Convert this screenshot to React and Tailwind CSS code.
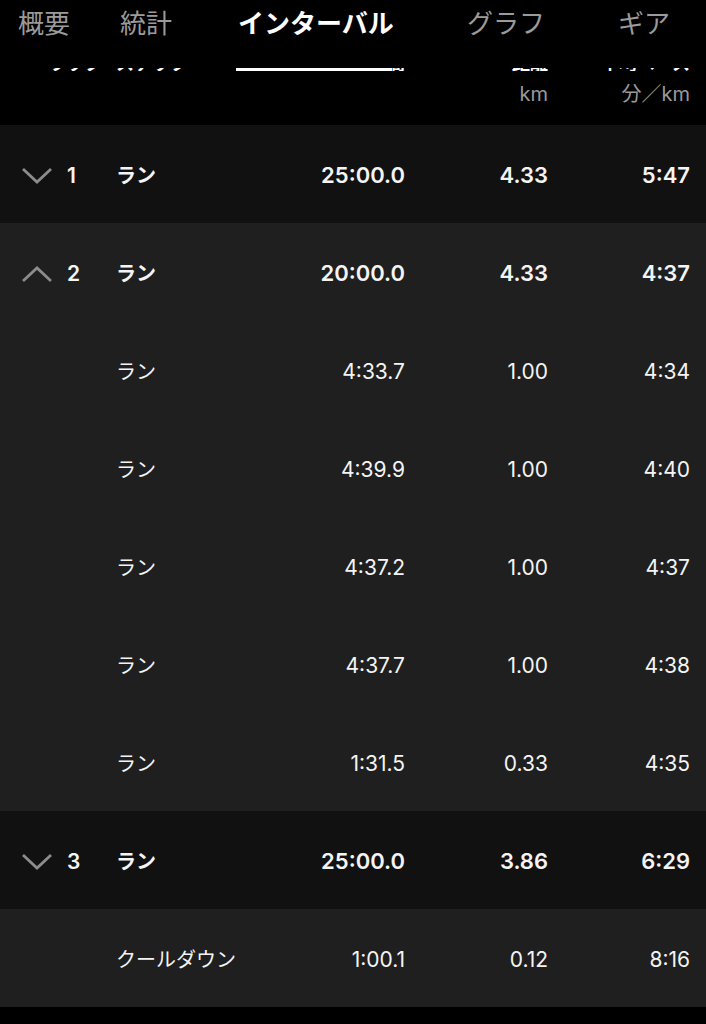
import React from "react";

const font = { fontFamily: '"Inter", "Noto Sans CJK JP", sans-serif' };

const rows = [
  { type: "main", open: false, n: "1", label: "ラン", time: "25:00.0", dist: "4.33", pace: "5:47", dark: true },
  { type: "main", open: true, n: "2", label: "ラン", time: "20:00.0", dist: "4.33", pace: "4:37" },
  { type: "sub", label: "ラン", time: "4:33.7", dist: "1.00", pace: "4:34" },
  { type: "sub", label: "ラン", time: "4:39.9", dist: "1.00", pace: "4:40" },
  { type: "sub", label: "ラン", time: "4:37.2", dist: "1.00", pace: "4:37" },
  { type: "sub", label: "ラン", time: "4:37.7", dist: "1.00", pace: "4:38" },
  { type: "sub", label: "ラン", time: "1:31.5", dist: "0.33", pace: "4:35" },
  { type: "main", open: false, n: "3", label: "ラン", time: "25:00.0", dist: "3.86", pace: "6:29", dark: true },
  { type: "sub", label: "クールダウン", time: "1:00.1", dist: "0.12", pace: "8:16" },
];

const Chevron = ({ up }) => (
  <svg width="32" height="18" viewBox="0 0 32 18" className="shrink-0">
    <path
      d={up ? "M2 16 L16 3 L30 16" : "M2 2 L16 15 L30 2"}
      fill="none"
      stroke="#8c8c8c"
      strokeWidth="2.8"
    />
  </svg>
);

const Row = ({ r }) => {
  const main = r.type === "main";
  const num = main ? "font-semibold text-[22px]" : "font-normal text-[21px]";
  return (
    <div
      className={`flex items-center h-[98px] pt-[3px] pr-[16px] text-[20px] text-[#f4f4f4] ${
        main ? "font-semibold" : "font-normal"
      } ${r.dark ? "bg-[#111111]" : "bg-[#1f1f1f]"}`}
    >
      <div className="w-[116px] flex items-center pl-[21px]">
        {main && (
          <>
            <Chevron up={r.open} />
            <span className="ml-[14px] text-[21px]">{r.n}</span>
          </>
        )}
      </div>
      <div className="flex-1">{r.label}</div>
      <div className={`w-[120px] text-right ${num}`}>{r.time}</div>
      <div className={`w-[143px] text-right ${num}`}>{r.dist}</div>
      <div className={`w-[142px] text-right ${num}`}>{r.pace}</div>
    </div>
  );
};

export default function App() {
  return (
    <div className="w-[706px] h-[1024px] bg-black overflow-hidden" style={font}>
      {/* tabs */}
      <div className="flex items-start h-[68px] pt-[4px] text-[26px] text-[#9b9b9b] whitespace-nowrap">
        <div className="ml-[18px]">概要</div>
        <div className="ml-[50px]">統計</div>
        <div className="ml-[66px] w-[157px] font-bold text-white">インターバル</div>
        <div className="ml-[72px]">グラフ</div>
        <div className="ml-[73px]">ギア</div>
      </div>
      {/* header, scrolled under tabs */}
      <div className="relative h-[57px]">
        <div className="absolute left-[236px] top-0 w-[156px] h-[3px] bg-white z-10" />
        <div className="h-[3px] overflow-hidden">
          <div className="flex items-end -mt-[17px] h-[22px] pr-[16px] text-[18px] leading-[18px] font-bold text-white whitespace-nowrap">
            <div className="w-[116px] pl-[48px]">ラップ</div>
            <div className="flex-1">ステップ</div>
            <div className="w-[120px] text-right">時間</div>
            <div className="w-[143px] text-right">距離</div>
            <div className="w-[142px] text-right">平均ペース</div>
          </div>
        </div>
        <div className="flex justify-end pr-[16px] mt-[8px] text-[20px] text-[#9a9a9a]">
          <div className="w-[143px] text-right">km</div>
          <div className="w-[142px] text-right">分／km</div>
        </div>
      </div>
      {rows.map((r, i) => (
        <Row key={i} r={r} />
      ))}
    </div>
  );
}
